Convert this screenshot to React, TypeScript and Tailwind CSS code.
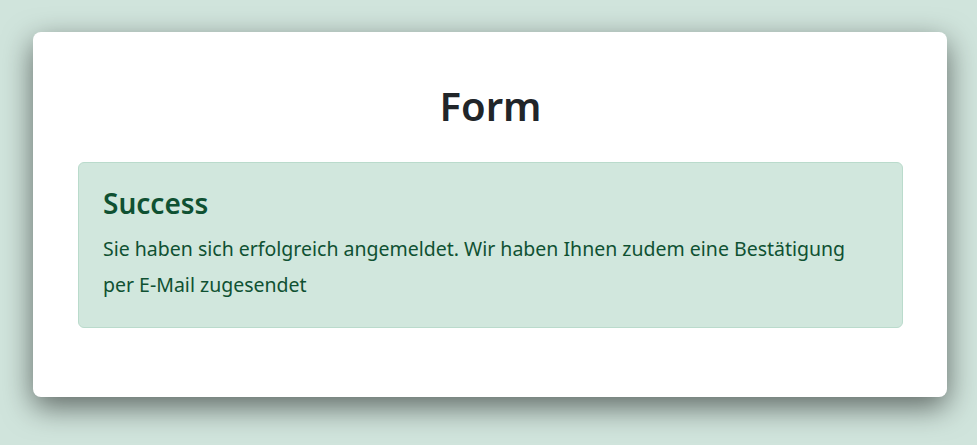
export default function App() {
  return (
    <div
      className="min-h-[445px] bg-[#d0e4dc] pt-[32px] pb-[49px]"
      style={{ fontFamily: '"Noto Sans", "Open Sans", sans-serif' }}
    >
      <div className="ml-[33px] w-[914px] rounded-lg bg-white pl-[45px] pr-[44px] pt-[50px] pb-[69px] shadow-[0_10px_30px_rgba(0,0,0,0.55)]">
        <h1 className="text-center text-[40px] leading-[48px] font-semibold text-[#212529]">
          Form
        </h1>

        <div className="mt-[32px] rounded-md border border-[#badbcc] bg-[#d1e7dd] px-[24px] pt-[24px] pb-[24px] text-[#0f5132]">
          <h4 className="mb-[10px] text-[28px] leading-[1.2] font-semibold">Success</h4>
          <p className="text-[19.5px] leading-[36px]">
            Sie haben sich erfolgreich angemeldet. Wir haben Ihnen zudem eine Bestätigung
            per E-Mail zugesendet
          </p>
        </div>
      </div>
    </div>
  );
}
